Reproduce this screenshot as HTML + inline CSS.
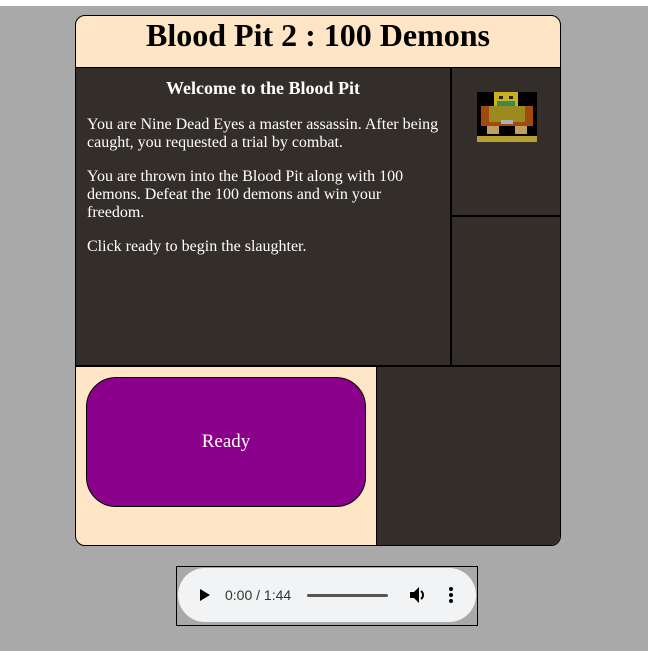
<!DOCTYPE html>
<html><head><meta charset="utf-8"><style>
*{margin:0;padding:0;box-sizing:border-box}
html,body{width:648px;height:651px;overflow:hidden}
body{background:#a9a9a9;font-family:"Liberation Serif",serif;position:relative}
.top{position:absolute;left:0;top:0;width:648px;height:6px;background:#fff}
.card{position:absolute;left:75px;top:15px;width:486px;height:531px;border:1px solid #000;border-radius:10px;overflow:hidden;background:#fde5c5}
.abs{position:absolute}
.dark{background:#332e29}
h1{position:absolute;left:0;top:0;width:484px;height:51px;text-align:center;font-size:32px;font-weight:bold;line-height:38px}
.txt{color:#fff;font-size:16px;line-height:18px}
.txt h2{font-size:18px;text-align:center;line-height:22px;margin-top:9px;margin-bottom:17px}
.txt p{margin:0 0 16px 11px;width:360px;white-space:nowrap}
.btn{position:absolute;left:10px;top:10px;width:280px;height:130px;background:#8b008b;border:1px solid #000;border-radius:30px;color:#fff;font-size:19px;display:flex;align-items:center;justify-content:center}
.audio{position:absolute;left:176px;top:566px;width:302px;height:60px;border:1px solid #000}
.pill{position:absolute;left:1px;top:1px;width:298px;height:54px;background:#f1f3f4;border-radius:27px;font-family:"Liberation Sans",sans-serif}
</style></head><body>
<div class="top"></div>
<div class="card">
 <h1>Blood Pit 2 : 100 Demons</h1>
 <div class="abs" style="left:0;top:51px;width:486px;height:1px;background:#000"></div>
 <div class="abs dark txt" style="left:0;top:52px;width:374px;height:297px">
  <h2>Welcome to the Blood Pit</h2>
  <p>You are Nine Dead Eyes a master assassin. After being<br>caught, you requested a trial by combat.</p>
  <p>You are thrown into the Blood Pit along with 100<br>demons. Defeat the 100 demons and win your<br>freedom.</p>
  <p>Click ready to begin the slaughter.</p>
 </div>
 <div class="abs" style="left:374px;top:52px;width:2px;height:298px;background:#000"></div>
 <div class="abs dark" style="left:376px;top:52px;width:110px;height:147px">
  <svg style="position:absolute;left:25px;top:24px" width="60" height="50" viewBox="0 0 60 50">
   <rect width="60" height="44" fill="#000"/>
   <rect x="17" y="0" width="24" height="14" fill="#c8b020"/>
   <rect x="22" y="4" width="4" height="3" fill="#222"/><rect x="32" y="4" width="4" height="3" fill="#222"/>
   <rect x="20" y="9" width="18" height="5" fill="#3a8a50"/>
   <rect x="4" y="14" width="52" height="20" fill="#a04a10"/>
   <rect x="12" y="14" width="36" height="16" fill="#9a8a20"/>
   <rect x="24" y="28" width="12" height="4" fill="#b0b0b0"/>
   <rect x="10" y="34" width="12" height="8" fill="#c0a060"/><rect x="38" y="34" width="12" height="8" fill="#c0a060"/>
   <rect x="0" y="44" width="60" height="6" fill="#b8a030"/>
  </svg>
 </div>
 <div class="abs" style="left:376px;top:199px;width:110px;height:2px;background:#000"></div>
 <div class="abs dark" style="left:376px;top:201px;width:110px;height:148px"></div>
 <div class="abs" style="left:0;top:349px;width:486px;height:2px;background:#000"></div>
 <div class="abs" style="left:0;top:351px;width:300px;height:180px">
  <div class="btn">Ready</div>
 </div>
 <div class="abs" style="left:300px;top:351px;width:1px;height:180px;background:#000"></div>
 <div class="abs dark" style="left:301px;top:351px;width:186px;height:180px"></div>
</div>
<div class="audio"><div class="pill">
 <svg class="abs" style="left:22px;top:21px" width="10" height="12"><path d="M0 0L10 6L0 12Z" fill="#000"/></svg>
 <div class="abs" style="left:47px;top:19px;font-size:14px;color:#333">0:00 / 1:44</div>
 <div class="abs" style="left:129px;top:26px;width:81px;height:3px;background:#555;border-radius:2px"></div>
 <svg class="abs" style="left:232px;top:19px" width="18" height="16" viewBox="0 0 18 16"><path d="M0 5h4l5-5v16l-5-5H0Z" fill="#000"/><path d="M11 4a5 5 0 0 1 0 8" stroke="#000" stroke-width="2" fill="none"/></svg>
 <svg class="abs" style="left:271px;top:19px" width="4" height="16"><circle cx="2" cy="2" r="2"/><circle cx="2" cy="8" r="2"/><circle cx="2" cy="14" r="2"/></svg>
</div></div>
</body></html>
